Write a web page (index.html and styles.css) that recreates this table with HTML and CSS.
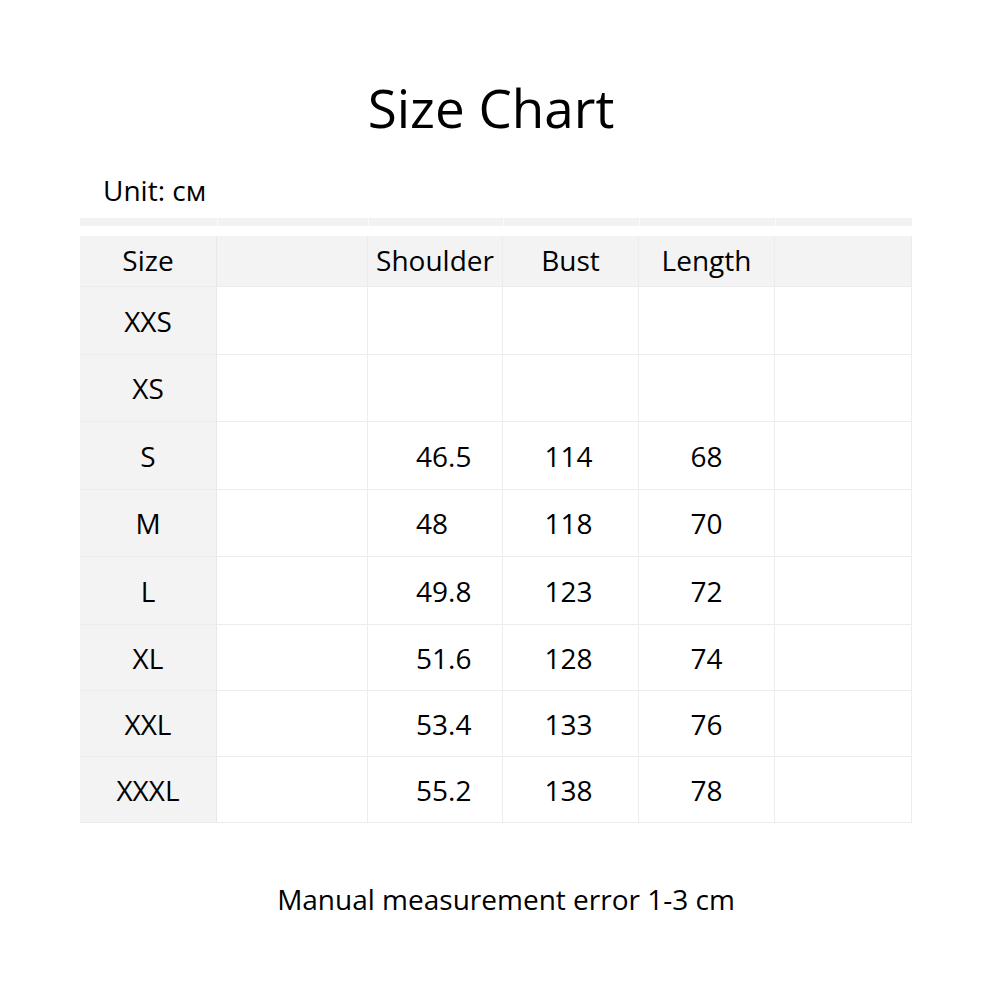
FILE: index.html
```html
<!DOCTYPE html>
<html lang="en">
<head>
<meta charset="utf-8">
<title>Size Chart</title>
<link rel="stylesheet" href="styles.css">
</head>
<body>
<div class="page">
  <h1 class="title">Size Chart</h1>
  <div class="unit">Unit: см</div>
  <div class="strip">
    <div class="sc sc-first"></div><div class="sc"></div><div class="sc"></div><div class="sc"></div><div class="sc"></div><div class="sc"></div>
  </div>
  <div class="table">
    <div class="cell head size">Size</div>
    <div class="cell head"></div>
    <div class="cell head">Shoulder</div>
    <div class="cell head">Bust</div>
    <div class="cell head">Length</div>
    <div class="cell head last"></div>

    <div class="cell size">XXS</div><div class="cell"></div><div class="cell sh"></div><div class="cell bu"></div><div class="cell"></div><div class="cell last"></div>
    <div class="cell size">XS</div><div class="cell"></div><div class="cell sh"></div><div class="cell bu"></div><div class="cell"></div><div class="cell last"></div>
    <div class="cell size">S</div><div class="cell"></div><div class="cell sh">46.5</div><div class="cell bu">114</div><div class="cell">68</div><div class="cell last"></div>
    <div class="cell size">M</div><div class="cell"></div><div class="cell sh">48</div><div class="cell bu">118</div><div class="cell">70</div><div class="cell last"></div>
    <div class="cell size">L</div><div class="cell"></div><div class="cell sh">49.8</div><div class="cell bu">123</div><div class="cell">72</div><div class="cell last"></div>
    <div class="cell size">XL</div><div class="cell"></div><div class="cell sh">51.6</div><div class="cell bu">128</div><div class="cell">74</div><div class="cell last"></div>
    <div class="cell size">XXL</div><div class="cell"></div><div class="cell sh">53.4</div><div class="cell bu">133</div><div class="cell">76</div><div class="cell last"></div>
    <div class="cell size">XXXL</div><div class="cell"></div><div class="cell sh">55.2</div><div class="cell bu">138</div><div class="cell">78</div><div class="cell last"></div>
  </div>
  <div class="note">Manual measurement error 1-3 cm</div>
</div>
</body>
</html>
```
FILE: styles.css
```css
html, body {
  margin: 0;
  padding: 0;
  background: #ffffff;
}
body {
  font-family: "Open Sans", "Noto Sans", "Liberation Sans", sans-serif;
  color: #000000;
}
.page {
  width: 1000px;
  height: 1000px;
  padding-top: 72px;
  box-sizing: border-box;
}
.title {
  margin: 0;
  padding-right: 18px;
  text-align: center;
  font-weight: 400;
  font-size: 53px;
  line-height: 72px;
  height: 72px;
}
.unit {
  margin: 28px 0 0 103px;
  font-size: 28px;
  line-height: 36px;
  height: 36px;
}
.strip {
  margin: 10px 0 0 80px;
  width: 832px;
  height: 8px;
  display: grid;
  grid-template-columns: 137px 151px 135px 136px 136px 137px;
  background: #f2f2f2;
}
.sc {
  border-left: 1px solid #fafafa;
}
.sc-first {
  border-left: none;
}
.table {
  margin: 10px 0 0 80px;
  width: 832px;
  display: grid;
  grid-template-columns: 137px 151px 135px 136px 136px 137px;
  grid-template-rows: 51px 68px 67px 68px 67px 68px 66px 66px 66px;
}
.cell {
  display: flex;
  align-items: center;
  justify-content: center;
  font-size: 28px;
  border-right: 1px solid #ececec;
  border-bottom: 1px solid #ececec;
  box-sizing: border-box;
}
.head {
  background: #f3f3f3;
  padding-bottom: 2px;
}
.size {
  background: #f3f3f3;
  border-right-color: #e8e8e8;
}
.sh {
  justify-content: flex-start;
  padding-left: 48px;
}
.bu {
  padding-right: 4px;
}
.note {
  margin-top: 58px;
  padding-left: 12px;
  text-align: center;
  font-size: 28px;
  line-height: 36px;
}
```
